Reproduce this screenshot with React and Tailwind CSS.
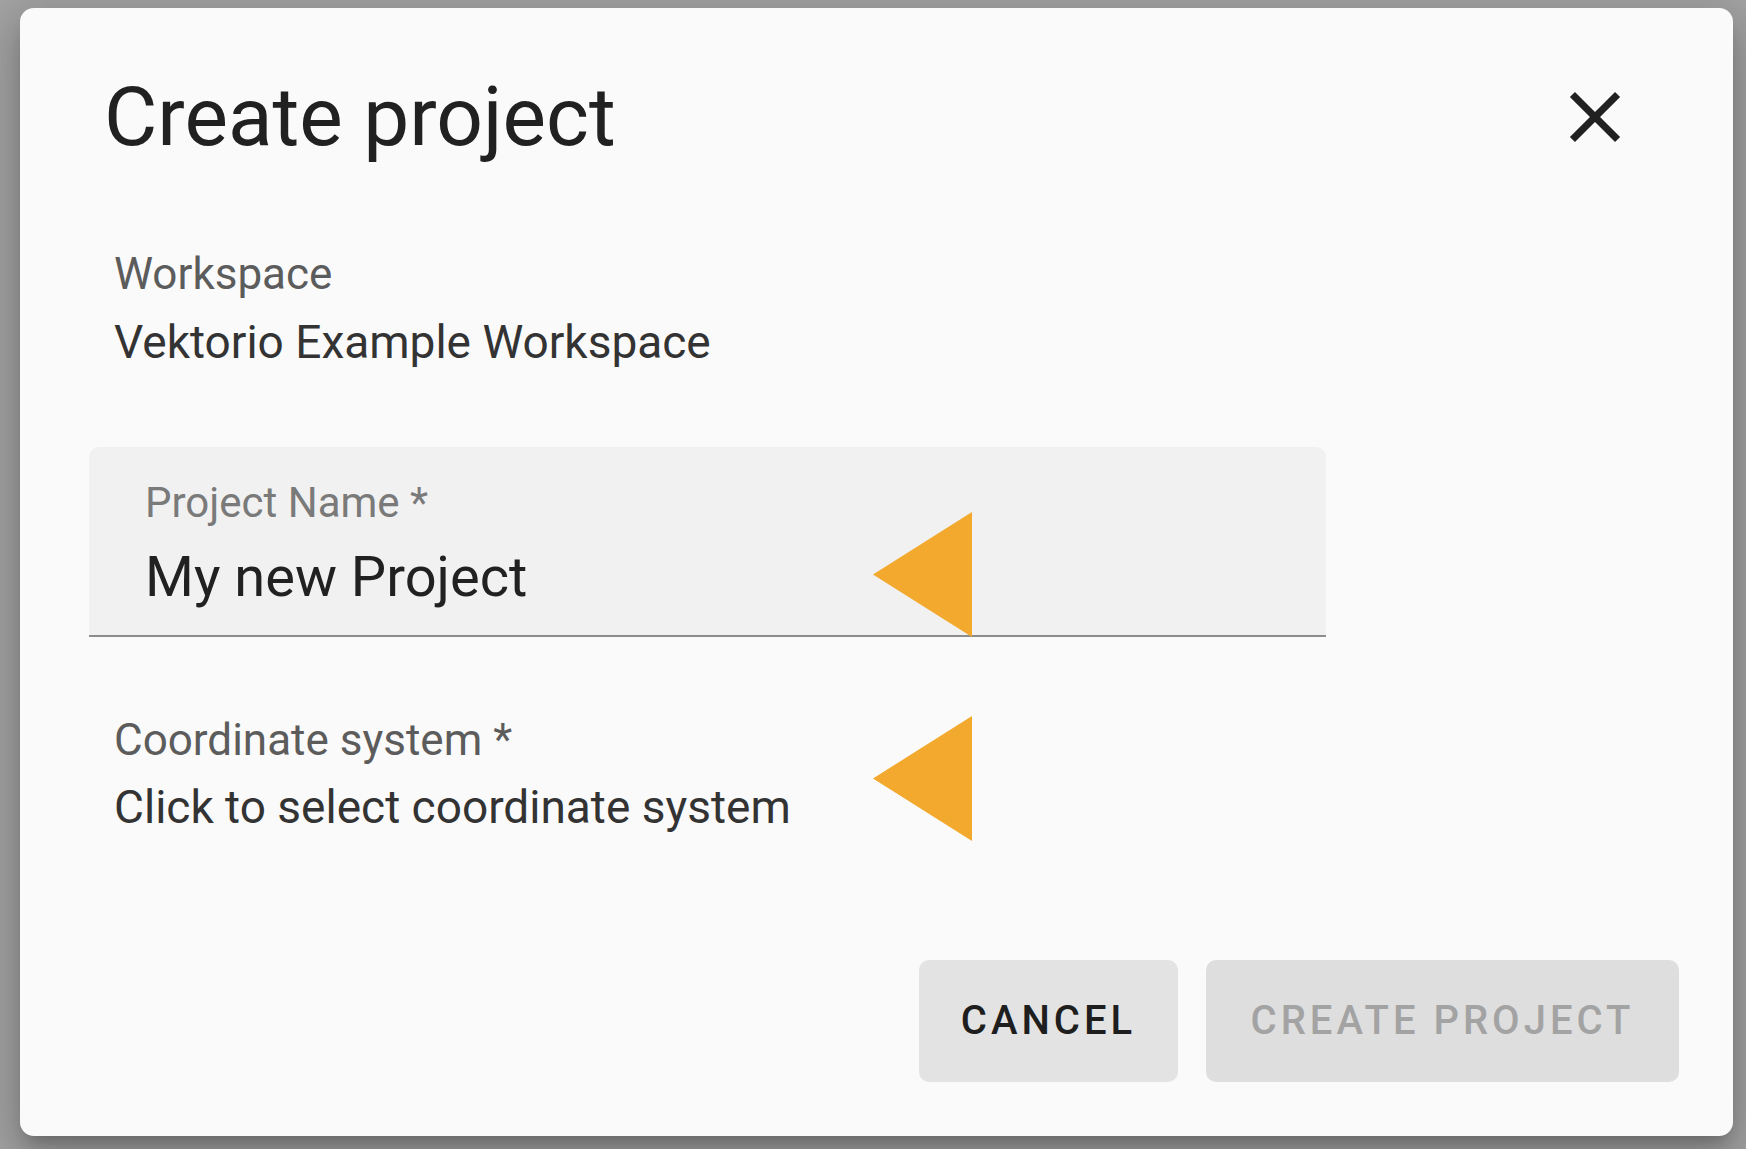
import React from 'react';

function CloseIcon({ className }) {
  return (
    <svg viewBox="0 0 24 24" className={className} fill="currentColor">
      <path d="M19 6.41 17.59 5 12 10.59 6.41 5 5 6.41 10.59 12 5 17.59 6.41 19 12 13.41 17.59 19 19 17.59 13.41 12z" />
    </svg>
  );
}

// orange pointer arrows laid over the dialog
function Pointer({ top }) {
  return (
    <svg
      className="absolute left-[873px] w-[99px] h-[125px]"
      style={{ top }}
      viewBox="0 0 99 125"
    >
      <polygon points="0,62.5 99,0 99,125" fill="#f2a92d" />
    </svg>
  );
}

export default function App() {
  return (
    <div className="relative w-full h-[1149px] bg-[#a2a2a2] overflow-hidden font-['Roboto',sans-serif]">
      <div className="pt-[8px] pl-[20px]">
        <div className="w-[1713px] h-[1128px] bg-[#fafafa] rounded-[14px] shadow-[0_11px_15px_-7px_rgba(0,0,0,0.2),0_24px_38px_3px_rgba(0,0,0,0.14),0_9px_46px_8px_rgba(0,0,0,0.12)] flex flex-col">
          {/* Header */}
          <div className="flex items-center justify-between pt-[61px] pl-[84px] pr-[95px]">
            <h2 className="text-[82px] leading-[96px] font-normal text-[#212121]">Create project</h2>
            <button className="w-[86px] h-[86px] text-[#212121]">
              <CloseIcon className="w-[86px] h-[86px]" />
            </button>
          </div>

          {/* Workspace */}
          <div className="mt-[75px] pl-[94px] leading-[68px]">
            <div className="text-[44px] text-[#5c5c5c]">Workspace</div>
            <div className="text-[46px] text-[#333333]">Vektorio Example Workspace</div>
          </div>

          {/* Project name field */}
          <div className="mt-[71px] ml-[69px] w-[1237px] h-[190px] bg-[#f1f1f1] rounded-t-[10px] border-b-2 border-[#8c8c8c] pl-[56px] pt-[31px]">
            <div className="text-[42px] leading-[50px] text-[#7a7a7a]">Project Name *</div>
            <div className="mt-[14px] text-[56px] leading-[70px] text-[#212121]">My new Project</div>
          </div>

          {/* Coordinate system */}
          <div className="mt-[70px] pl-[94px] leading-[67px]">
            <div className="text-[44px] text-[#5c5c5c]">Coordinate system *</div>
            <div className="text-[46px] text-[#333333]">Click to select coordinate system</div>
          </div>

          {/* Actions */}
          <div className="mt-auto flex justify-end gap-[28px] pr-[54px] pb-[54px]">
            <button className="w-[259px] h-[122px] rounded-[10px] bg-[#e3e3e3] text-[40px] font-medium tracking-[0.1em] text-[#1e1e1e]">
              CANCEL
            </button>
            <button className="w-[473px] h-[122px] rounded-[10px] bg-[#dedede] text-[40px] font-medium tracking-[0.1em] text-[#a3a3a3]">
              CREATE PROJECT
            </button>
          </div>
        </div>
      </div>

      <Pointer top={512} />
      <Pointer top={716} />
    </div>
  );
}
